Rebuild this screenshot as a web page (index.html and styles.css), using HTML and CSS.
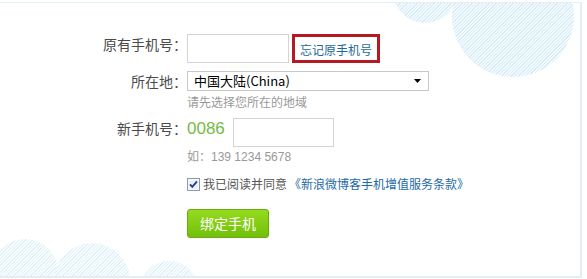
FILE: index.html
```html
<!DOCTYPE html>
<html lang="zh-CN">
<head>
<meta charset="utf-8">
<title>绑定手机</title>
<link rel="stylesheet" href="styles.css">
</head>
<body>
<div class="frame">
  <div class="cloud cloud-tr-small"></div>
  <div class="cloud cloud-tr-big"></div>
  <div class="cloud cloud-bl cloud-bl-1"></div>
  <div class="cloud cloud-bl cloud-bl-2"></div>
  <div class="cloud cloud-bl cloud-bl-3"></div>

  <form class="form">
    <div class="row row-old">
      <label class="label">原有手机号：</label>
      <div class="field field-inline">
        <span class="input input-old"></span>
        <a class="forgot" href="#">忘记原手机号</a>
      </div>
    </div>

    <div class="row row-area">
      <label class="label">所在地：</label>
      <div class="field">
        <div class="select">
          <span class="select-text">中国大陆(China)</span>
          <svg class="select-arrow" width="7" height="4" viewBox="0 0 7 4"><path d="M0 0h7L3.5 4z" fill="#000"/></svg>
        </div>
      </div>
    </div>
    <div class="row row-hint">
      <span class="label"></span>
      <div class="field hint">请先选择您所在的地域</div>
    </div>

    <div class="row row-new">
      <label class="label">新手机号：</label>
      <div class="field field-inline">
        <span class="prefix">0086</span>
        <span class="input input-new"></span>
      </div>
    </div>
    <div class="row row-example">
      <span class="label"></span>
      <div class="field hint">如：139 1234 5678</div>
    </div>

    <div class="row row-agree">
      <span class="label"></span>
      <div class="field field-inline agree">
        <svg class="checkbox" width="13" height="13" viewBox="0 0 13 13">
          <rect x="0.5" y="0.5" width="12" height="12" fill="#fff" stroke="#8a9bb0"/>
          <rect x="1.5" y="1.5" width="10" height="10" fill="#eef2f7"/>
          <path d="M3 6.3 L5.3 8.8 L10 3.3" fill="none" stroke="#22409a" stroke-width="1.9"/>
        </svg>
        <span class="agree-text">我已阅读并同意</span>
        <a class="agree-link" href="#">《新浪微博客手机增值服务条款》</a>
      </div>
    </div>

    <div class="row row-submit">
      <span class="label"></span>
      <div class="field">
        <button type="button" class="btn">绑定手机</button>
      </div>
    </div>
  </form>
</div>
</body>
</html>
```

FILE: styles.css
```css
html, body {
  margin: 0;
  padding: 0;
  background: #fff;
}

body {
  font-family: "Noto Sans CJK SC", "Liberation Sans", sans-serif;
  color: #444;
}

.frame {
  position: relative;
  box-sizing: border-box;
  width: 582px;
  height: 276px;
  margin-top: 2px;
  border-top: 1px solid #e4eff3;
  border-right: 2px solid #e2eef4;
  border-bottom: 2px solid #e2eef4;
  overflow: hidden;
  background: #fff;
}

/* decorative hatched clouds */
.cloud {
  position: absolute;
  border-radius: 50%;
  background: repeating-linear-gradient(135deg, #d6edf8 0 1px, #f3fafd 1px 2.4px);
}
.cloud-tr-big {
  left: 452px;
  top: -48px;
  width: 122px;
  height: 122px;
}
.cloud-tr-small {
  left: 393px;
  top: -44px;
  width: 64px;
  height: 64px;
}
.cloud-bl {
  background: repeating-linear-gradient(135deg, #e2f1f8 0 1px, #f7fcfe 1px 2.4px);
}
.cloud-bl-1 {
  left: -8px;
  top: 236px;
  width: 66px;
  height: 66px;
}
.cloud-bl-2 {
  left: 54px;
  top: 240px;
  width: 76px;
  height: 76px;
}
.cloud-bl-3 {
  left: 140px;
  top: 258px;
  width: 58px;
  height: 58px;
}

/* form */
.form {
  position: relative;
  padding-top: 31px;
}

.row {
  display: flex;
  align-items: flex-start;
}

.label {
  flex: 0 0 187px;
  text-align: right;
  font-size: 14px;
  line-height: 20px;
  color: #4a4a4a;
}

.field {
  flex: 1 1 auto;
}

.field-inline {
  display: flex;
  align-items: center;
}

.input {
  display: block;
  box-sizing: border-box;
  height: 29px;
  border: 1px solid #d4d4d4;
  background: #fff;
}

.input-old {
  width: 102px;
}

.forgot {
  box-sizing: border-box;
  display: flex;
  align-items: center;
  justify-content: center;
  width: 88px;
  height: 29px;
  margin-left: 3px;
  border: 3px solid #b51a22;
  font-size: 12px;
  color: #1d6a9a;
  text-decoration: none;
  padding-top: 1px;
}

.row-area {
  margin-top: 8px;
  align-items: center;
}

.select {
  box-sizing: border-box;
  width: 242px;
  height: 20px;
  border: 1px solid #c8c8c8;
  display: flex;
  align-items: center;
  justify-content: space-between;
  padding: 0 7px 0 6px;
  background: #fff;
}

.select-text {
  font-size: 13px;
  color: #000;
  line-height: 18px;
}

.select-arrow {
  display: block;
}

.hint {
  font-size: 12px;
  line-height: 14px;
  color: #999;
}

.row-hint {
  margin-top: 4px;
}

.row-new {
  margin-top: 9px;
}

.prefix {
  font-family: "Liberation Sans", "Noto Sans CJK SC", sans-serif;
  font-size: 17px;
  color: #74bb45;
  margin-right: 8px;
  align-self: flex-start;
  line-height: 22px;
}

.input-new {
  width: 101px;
}

.row-example {
  margin-top: 3px;
}

.row-example .hint {
  font-family: "Liberation Sans", "Noto Sans CJK SC", sans-serif;
  font-size: 12px;
  color: #999;
}

.row-agree {
  margin-top: 13px;
}

.agree {
  font-size: 12px;
  line-height: 14px;
}

.checkbox {
  display: block;
  margin-right: 3px;
}

.agree-text {
  color: #555;
}

.agree-link {
  color: #1d6aa5;
  text-decoration: none;
  margin-left: 2px;
}

.row-submit {
  margin-top: 18px;
}

.btn {
  display: block;
  box-sizing: border-box;
  width: 82px;
  height: 29px;
  padding: 0;
  border: 1px solid #67ad10;
  border-radius: 3px;
  background: linear-gradient(#95da1e, #72c00a);
  color: #fff;
  font-family: "Noto Sans CJK SC", sans-serif;
  font-size: 14px;
  line-height: 27px;
  cursor: pointer;
}
```
